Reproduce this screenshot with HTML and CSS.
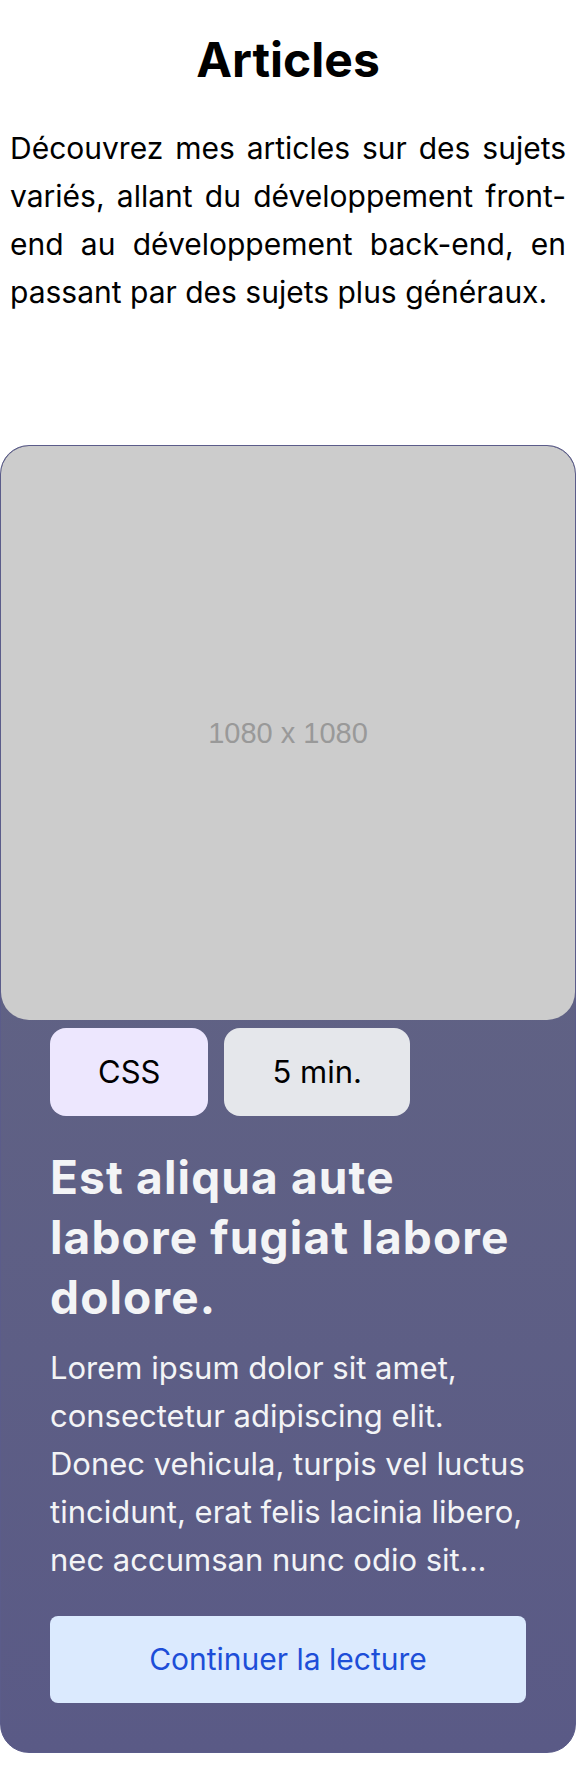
FILE: index.html
```html
<!DOCTYPE html>
<html lang="fr">
<head>
<meta charset="utf-8">
<title>Articles</title>
<link rel="stylesheet" href="styles.css">
</head>
<body>
<main class="page">
  <header class="intro">
    <h1 class="intro-title">Articles</h1>
    <p class="intro-text">Découvrez mes articles sur des sujets variés, allant du développement front-end au développement back-end, en passant par des sujets plus généraux.</p>
  </header>
  <article class="card">
    <div class="card-media"><span class="card-media-label">1080 x 1080</span></div>
    <div class="card-body">
      <div class="tags">
        <span class="tag tag-css">CSS</span>
        <span class="tag tag-time">5 min.</span>
      </div>
      <h2 class="card-title">Est aliqua aute labore fugiat labore dolore.</h2>
      <p class="card-text">Lorem ipsum dolor sit amet, consectetur adipiscing elit. Donec vehicula, turpis vel luctus tincidunt, erat felis lacinia libero, nec accumsan nunc odio sit...</p>
      <a class="card-button" href="#">Continuer la lecture</a>
    </div>
  </article>
</main>
</body>
</html>
```
FILE: styles.css
```css
html, body {
  margin: 0;
  padding: 0;
  background: #ffffff;
}

body {
  font-family: Inter, "Noto Sans", "DejaVu Sans", sans-serif;
  color: #000000;
}

.page {
  display: flex;
  flex-direction: column;
}

.intro {
  padding: 36px 10px 0;
  text-align: center;
}

.intro-title {
  margin: 0;
  font-size: 48px;
  line-height: 48px;
  font-weight: 700;
}

.intro-text {
  margin: 40px 0 0;
  font-size: 30px;
  line-height: 48px;
  text-align: justify;
}

.card {
  margin-top: 129px;
  border: 1px solid #5b5c8a;
  border-radius: 29px;
  background: linear-gradient(180deg, #646783 0%, #5a5a86 100%);
  overflow: hidden;
}

.card-media {
  aspect-ratio: 1 / 1;
  background: #cccccc;
  border-radius: 28px;
  display: flex;
  align-items: center;
  justify-content: center;
}

.card-media-label {
  font-family: "Liberation Sans", Arial, sans-serif;
  font-size: 29px;
  color: #999999;
}

.card-body {
  padding: 8px 49px 49px;
  display: flex;
  flex-direction: column;
}

.tags {
  display: flex;
  gap: 16px;
}

.tag {
  padding: 21px 48px;
  font-size: 31px;
  line-height: 46px;
  border-radius: 16px;
  color: #000000;
}

.tag-css {
  background: #ede7fe;
}

.tag-time {
  background: #e5e7eb;
}

.card-title {
  margin: 31px 0 0;
  font-size: 46px;
  line-height: 60px;
  font-weight: 700;
  letter-spacing: 0.025em;
  color: #f3f4f6;
}

.card-text {
  margin: 17px 0 0;
  font-size: 31px;
  line-height: 48px;
  color: #f3f4f6;
}

.card-button {
  margin-top: 32px;
  display: block;
  padding: 21px 16px;
  font-size: 30px;
  line-height: 45px;
  text-align: center;
  text-decoration: none;
  color: #1d4ed8;
  background: #dbeafe;
  border-radius: 8px;
}
```
